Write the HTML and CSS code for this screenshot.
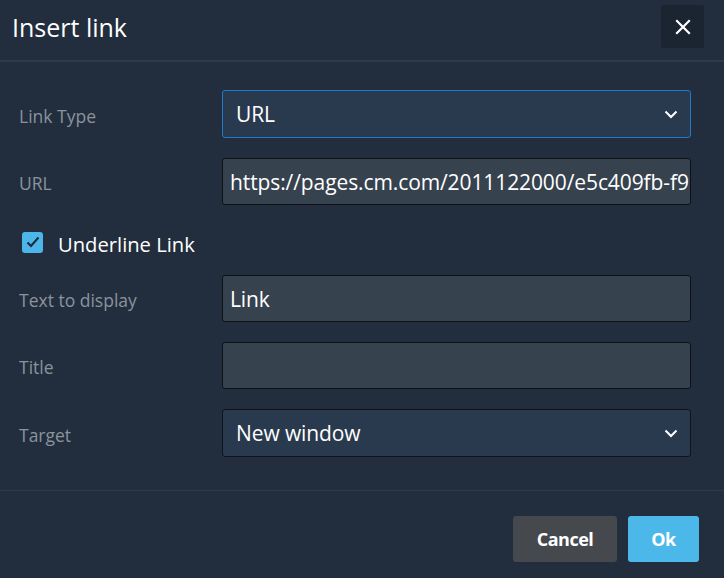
FILE: index.html
```html
<!DOCTYPE html>
<html>
<head>
<meta charset="utf-8">
<link rel="stylesheet" href="styles.css">
</head>
<body>
<div class="dialog">
  <div class="header">
    <div class="title">Insert link</div>
    <button class="close" aria-label="Close">
      <svg width="16" height="16" viewBox="0 0 16 16"><path d="M2 2 L14 14 M14 2 L2 14" stroke="#fff" stroke-width="2.2" stroke-linecap="square" fill="none"/></svg>
    </button>
  </div>
  <div class="body">
    <div class="row">
      <div class="label">Link Type</div>
      <div class="select focus"><span>URL</span>
        <svg class="chev" width="14" height="9" viewBox="0 0 14 9"><path d="M1.5 1.5 L7 7 L12.5 1.5" stroke="#fff" stroke-width="2" fill="none"/></svg>
      </div>
    </div>
    <div class="row">
      <div class="label">URL</div>
      <div class="input url"><span>https://pages.cm.com/2011122000/e5c409fb-f9</span></div>
    </div>
    <div class="check-row">
      <span class="checkbox">
        <svg width="14" height="12" viewBox="0 0 14 12"><path d="M1.5 6.5 L5 10 L12.5 1.5" stroke="#1d2736" stroke-width="2" fill="none"/></svg>
      </span>
      <span class="check-label">Underline Link</span>
    </div>
    <div class="row">
      <div class="label">Text to display</div>
      <div class="input"><span>Link</span></div>
    </div>
    <div class="row">
      <div class="label">Title</div>
      <div class="input"><span></span></div>
    </div>
    <div class="row">
      <div class="label">Target</div>
      <div class="select"><span>New window</span>
        <svg class="chev" width="14" height="9" viewBox="0 0 14 9"><path d="M1.5 1.5 L7 7 L12.5 1.5" stroke="#fff" stroke-width="2" fill="none"/></svg>
      </div>
    </div>
  </div>
  <div class="footer">
    <button class="btn cancel">Cancel</button>
    <button class="btn ok">Ok</button>
  </div>
</div>
</body>
</html>
```
FILE: styles.css
```css
html, body {
  margin: 0;
  padding: 0;
  background: #222e3e;
}
body {
  font-family: "Open Sans", "Noto Sans", sans-serif;
  color: #fff;
  width: 724px;
  height: 578px;
  overflow: hidden;
}
.dialog {
  display: flex;
  flex-direction: column;
}
.header {
  height: 60px;
  border-bottom: 2px solid #2e3a4a;
  display: flex;
  align-items: flex-start;
  justify-content: space-between;
  padding: 0 20px 0 12px;
}
.title {
  font-size: 25px;
  line-height: 26px;
  margin-top: 14px;
}
.close {
  width: 43px;
  height: 43px;
  margin-top: 5px;
  background: #1b2431;
  border: none;
  border-radius: 3px;
  display: flex;
  align-items: center;
  justify-content: center;
  padding: 0;
}
.body {
  padding: 28px 33px 0 19px;
  height: 429px;
  flex: none;
  border-bottom: 1px solid #2e3a4a;
  box-sizing: border-box;
  display: flex;
  flex-direction: column;
}
.row {
  display: flex;
  align-items: center;
  margin-bottom: 20px;
}
.label {
  width: 203px;
  font-size: 17.5px;
  color: #8b939c;
  padding-top: 3px;
}
.select, .input {
  flex: 1;
  box-sizing: border-box;
  height: 47px;
  border-radius: 3px;
  display: flex;
  align-items: center;
  font-size: 21px;
  white-space: nowrap;
  overflow: hidden;
  letter-spacing: -0.1px;
}
.select {
  background: #2a3a4e;
  border: 1px solid #0f141b;
  padding: 0 12px 0 13px;
  justify-content: space-between;
  height: 48px;
}
.select.focus {
  border-color: #1f7bc7;
}
.input {
  background: #37424f;
  border: 1px solid #0d1117;
  padding: 0 7px;
}
.check-row {
  display: flex;
  align-items: center;
  margin: 6px 0 22px 3px;
  height: 22px;
}
.checkbox {
  width: 21px;
  height: 21px;
  background: #4cb5e9;
  border-radius: 3px;
  display: flex;
  align-items: center;
  justify-content: center;
}
.check-label {
  margin-left: 15px;
  font-size: 20.2px;
  padding-top: 3px;
}
.footer {
  display: flex;
  justify-content: flex-end;
  padding: 25px 25px 0 0;
  gap: 11px;
}
.btn {
  height: 46px;
  border: none;
  border-radius: 3px;
  font-family: "Open Sans", "Noto Sans", sans-serif;
  font-weight: 700;
  font-size: 18px;
  color: #fff;
  letter-spacing: -0.5px;
}
.cancel {
  width: 104px;
  background: #45494d;
}
.ok {
  width: 71px;
  background: #4cb8e9;
}
```
